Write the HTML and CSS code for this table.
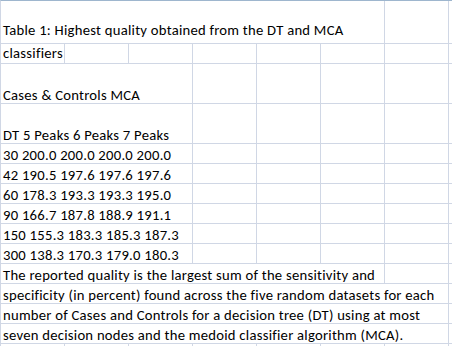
FILE: index.html
```html
<!DOCTYPE html>
<html>
<head>
<meta charset="utf-8">
<link rel="stylesheet" href="styles.css">
</head>
<body>
<div class="sheet">
  <div class="row r-title">
    <div class="cell s6">Table 1: Highest quality obtained from the DT and MCA</div>
    <div class="cell"></div><div class="cell"></div>
  </div>
  <div class="row r-sub">
    <div class="cell">classifiers</div>
    <div class="cell"></div><div class="cell"></div><div class="cell"></div><div class="cell"></div><div class="cell"></div><div class="cell"></div><div class="cell"></div>
  </div>
  <div class="row tall">
    <div class="cell s3">Cases &amp; Controls MCA</div>
    <div class="cell"></div><div class="cell"></div><div class="cell"></div><div class="cell"></div><div class="cell"></div>
  </div>
  <div class="row tall">
    <div class="cell s3">DT 5 Peaks 6 Peaks 7 Peaks</div>
    <div class="cell"></div><div class="cell"></div><div class="cell"></div><div class="cell"></div><div class="cell"></div>
  </div>
  <div class="row">
    <div class="cell s3">30 200.0 200.0 200.0 200.0</div>
    <div class="cell"></div><div class="cell"></div><div class="cell"></div><div class="cell"></div><div class="cell"></div>
  </div>
  <div class="row">
    <div class="cell s3">42 190.5 197.6 197.6 197.6</div>
    <div class="cell"></div><div class="cell"></div><div class="cell"></div><div class="cell"></div><div class="cell"></div>
  </div>
  <div class="row">
    <div class="cell s3">60 178.3 193.3 193.3 195.0</div>
    <div class="cell"></div><div class="cell"></div><div class="cell"></div><div class="cell"></div><div class="cell"></div>
  </div>
  <div class="row">
    <div class="cell s3">90 166.7 187.8 188.9 191.1</div>
    <div class="cell"></div><div class="cell"></div><div class="cell"></div><div class="cell"></div><div class="cell"></div>
  </div>
  <div class="row">
    <div class="cell s3">150 155.3 183.3 185.3 187.3</div>
    <div class="cell"></div><div class="cell"></div><div class="cell"></div><div class="cell"></div><div class="cell"></div>
  </div>
  <div class="row">
    <div class="cell s3">300 138.3 170.3 179.0 180.3</div>
    <div class="cell"></div><div class="cell"></div><div class="cell"></div><div class="cell"></div><div class="cell"></div>
  </div>
  <div class="row">
    <div class="cell s6">The reported quality is the largest sum of the sensitivity and</div>
    <div class="cell"></div><div class="cell"></div>
  </div>
  <div class="row">
    <div class="cell s7">specificity (in percent) found across the five random datasets for each</div>
    <div class="cell"></div>
  </div>
  <div class="row">
    <div class="cell s7">number of Cases and Controls for a decision tree (DT) using at most</div>
    <div class="cell"></div>
  </div>
  <div class="row">
    <div class="cell s7">seven decision nodes and the medoid classifier algorithm (MCA).</div>
    <div class="cell"></div>
  </div>
  <div class="row">
    <div class="cell"></div><div class="cell"></div><div class="cell"></div><div class="cell"></div><div class="cell"></div><div class="cell"></div><div class="cell"></div><div class="cell"></div>
  </div>
</div>
</body>
</html>
```
FILE: styles.css
```css
html, body {
  margin: 0;
  padding: 0;
  background: #ffffff;
  overflow: hidden;
}
.sheet {
  width: 452px;
  height: 346px;
  overflow: hidden;
  border-top: 1px solid #9eb6ce;
  border-left: 1px solid #d0d7e5;
  font-family: Carlito, "Liberation Sans", sans-serif;
  font-size: 14.67px;
  letter-spacing: 0.25px;
  color: #000;
}
.row {
  display: grid;
  grid-template-columns: repeat(8, 64px);
  height: 20px;
}
.r-title { height: 43px; }
.row.tall { height: 40px; }
.cell {
  border-right: 1px solid #d0d7e5;
  border-bottom: 1px solid #d0d7e5;
  display: flex;
  align-items: flex-end;
  padding: 0 0 0 2px;
  white-space: nowrap;
  overflow: visible;
  line-height: 15px;
}
.r-title .cell { padding-bottom: 5px; }
.r-sub .cell { padding-bottom: 2px; }
.s3 { grid-column: span 3; }
.s6 { grid-column: span 6; }
.s7 { grid-column: span 7; }
```
